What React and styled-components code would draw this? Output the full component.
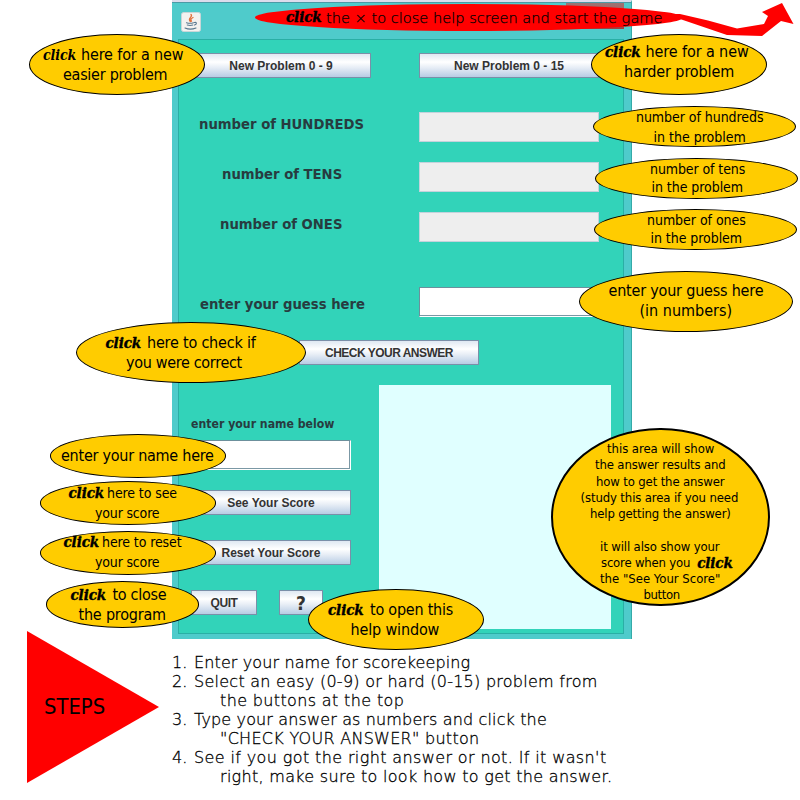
import React from "react";
import styled, { createGlobalStyle } from "styled-components";

const GlobalStyle = createGlobalStyle`
  * { box-sizing: border-box; }
  body { margin: 0; background: #fff; }
`;

const condensed = '"DejaVu Sans Condensed", "DejaVu Sans", sans-serif';

const Page = styled.main`
  position: relative;
  width: 800px;
  height: 800px;
  overflow: hidden;
  background: #fff;
  color: #000;
`;

/* ---------- game window ---------- */

const Window = styled.section`
  display: flex;
  flex-direction: column;
  width: 460px;
  height: 639px;
  margin-left: 172px;
  padding: 0 7px 5px 6px;
  background: #4fcbcb;
  border-top: 2px solid #dcdcec;
  border-right: 1px solid #35aaa8;
`;

const TitleBar = styled.header`
  display: flex;
  justify-content: space-between;
  height: 37px;
  margin: 0 -7px 0 -6px;
  padding: 9px 7px 0 9px;
  border-top: 1px solid #4b9aa6;
`;

const JavaIcon = styled.svg`
  width: 20px;
  height: 20px;
`;

const CloseBox = styled.div`
  width: 58px;
  height: 26px;
  margin-top: -9px;
  background: linear-gradient(#9c7474, #b05a5a 40%, #a04040);
`;

const Panel = styled.div`
  flex: 1;
  padding: 13px 12px 0;
  border: 1px solid #2aafa5;
  background: #32d3b9;
`;

const Row = styled.div`
  display: grid;
  grid-template-columns: 180px 180px;
  column-gap: 48px;
  align-items: center;
  height: ${(p) => p.$height}px;
  margin-bottom: ${(p) => p.$gap}px;
`;

const JButton = styled.button`
  display: block;
  width: ${(p) => p.$width || 180}px;
  height: 25px;
  padding: 1px 0 0;
  border: 1px solid #7a8fa8;
  background: linear-gradient(#dfe8f2, #fff 35%, #e8eef6 58%, #b8cce4);
  color: #333;
  font: bold 12px/22px "Liberation Sans", Arial, sans-serif;
  letter-spacing: ${(p) => p.$track || 0}px;
  text-align: center;
  white-space: nowrap;
`;

const HelpButton = styled(JButton)`
  font: bold 19px/22px ${condensed};
`;

const Label = styled.label`
  padding-top: ${(p) => p.$drop || 0}px;
  padding-left: ${(p) => p.$indent || 0}px;
  padding-bottom: ${(p) => p.$lift || 0}px;
  color: #273c40;
  font: bold 14.7px/20px ${condensed};
  white-space: nowrap;
`;

const NameLabel = styled(Label)`
  margin-bottom: 6px;
  font-size: 12.2px;
`;

const Digits = styled.output`
  height: 30px;
  background: #eee;
  border: 1px solid #c3d2dc;
`;

const Field = styled.div`
  height: 30px;
  background: #fff;
  border: 1px solid #6c909c;
  border-right-color: #fff;
  border-bottom-color: #fff;
  box-shadow: inset -1px -1px #7b98a5;
`;

const CheckRow = styled.div`
  display: flex;
  padding-left: 108px;
  margin-bottom: 20px;
`;

const Lower = styled.div`
  display: grid;
  grid-template-columns: 160px 232px;
  column-gap: 28px;
`;

const Account = styled.div`
  display: flex;
  flex-direction: column;
  padding-top: 29px;
`;

const AccountButtons = styled.div`
  display: flex;
  flex-direction: column;
  gap: 25px;
  padding-top: 20px;
`;

const ButtonPair = styled.div`
  display: flex;
  gap: 22px;
`;

const Results = styled.div`
  height: 244px;
  background: #e0ffff;
`;

/* ---------- callouts lying over the window ---------- */

const Bubble = styled.aside`
  position: absolute;
  left: ${(p) => p.$x}px;
  top: ${(p) => p.$y}px;
  width: ${(p) => p.$w}px;
  height: ${(p) => p.$h}px;
  padding-top: ${(p) => p.$pad}px;
  border: ${(p) => p.$border || 1.4}px solid #000;
  border-radius: 50%;
  background: #fc0;
  font: ${(p) => p.$size || 16}px/${(p) => p.$line || 20}px ${condensed};
`;

const BubbleLine = styled.div`
  display: flex;
  min-height: 1lh;
  padding-left: ${(p) => p.$indent}px;
  letter-spacing: ${(p) => p.$track || 0}px;
  white-space: pre;
`;

const Click = styled.em`
  width: ${(p) => p.$width || 38}px;
  font-family: "DejaVu Serif Condensed", "DejaVu Serif", serif;
  font-style: italic;
  font-weight: bold;
  font-size: ${(p) => p.$size || 15}px;
  letter-spacing: -0.1px;
  -webkit-text-stroke: ${(p) => (p.$size ? 0 : 0.4)}px #000;
`;

const CloseHint = styled.div`
  position: absolute;
  left: 255px;
  top: 4px;
  display: flex;
  width: 428px;
  height: 27px;
  padding-left: 31px;
  border-radius: 50%;
  background: #f00;
  font: 200 14.6px/27px "DejaVu Sans", sans-serif;
  -webkit-text-stroke: 0.25px #000;
  white-space: nowrap;
`;

const Arrow = styled.svg`
  position: absolute;
  left: 670px;
  top: 0;
  width: 130px;
  height: 40px;
`;

/* ---------- steps ---------- */

const Steps = styled.section`
  display: grid;
  grid-template-columns: 132px 1fr;
  column-gap: 13px;
  margin: -8px 0 0 27px;
`;

const Pointer = styled.div`
  display: flex;
  align-items: center;
  height: 152px;
  padding-left: 17px;
  background: #f00;
  clip-path: polygon(0 0, 100% 50%, 0 100%);
  font: 21.8px/24px ${condensed};
`;

const StepList = styled.ol`
  margin: 0;
  padding: 22px 0 0;
  list-style: none;
  font: 200 16px/19px "DejaVu Sans", sans-serif;
  -webkit-text-stroke: 0.3px #000;
`;

const Step = styled.li`
  display: grid;
  grid-template-columns: 22px 1fr;
`;

const StepLine = styled.span`
  grid-column: 2;
  padding-left: ${(p) => (p.$more ? 26 : 0)}px;
  letter-spacing: ${(p) => p.$track}px;
  white-space: nowrap;
`;

const bubbles = [
  { x: 29, y: 34, w: 176, h: 61, pad: 10, lines: [
    { indent: 13, click: 38, clickSize: 14, text: "here for a new", track: -0.15 },
    { indent: 33, text: "easier problem", track: -0.27 } ] },
  { x: 591, y: 34, w: 176, h: 61, pad: 7, lines: [
    { indent: 13, click: 40.5, text: "here for a new", track: -0.1 },
    { indent: 32, text: "harder problem", track: -0.1 } ] },
  { x: 593, y: 106, w: 203, h: 41, pad: 0, size: 14, lines: [
    { indent: 42, text: "number of hundreds", track: -0.05 },
    { indent: 59.5, text: "in the problem", track: 0 } ] },
  { x: 594.5, y: 158, w: 203, h: 41, pad: 1, size: 14, line: 18, lines: [
    { indent: 54.5, text: "number of tens", track: -0.1 },
    { indent: 56, text: "in the problem", track: -0.05 } ] },
  { x: 593.5, y: 209, w: 203, h: 41, pad: 1, size: 14, line: 18, lines: [
    { indent: 52.5, text: "number of ones", track: -0.04 },
    { indent: 56, text: "in the problem", track: -0.05 } ] },
  { x: 579, y: 271, w: 213.5, h: 61, pad: 9, lines: [
    { indent: 28.5, text: "enter your guess here", track: -0.2 },
    { indent: 59.5, text: "(in numbers)", track: 0 } ] },
  { x: 75.5, y: 322, w: 230.5, h: 61, pad: 10, lines: [
    { indent: 29, click: 41.5, text: "here to check if", track: -0.2 },
    { indent: 49.5, text: "you were correct", track: -0.32 } ] },
  { x: 50, y: 434, w: 176, h: 43.5, pad: 11, lines: [
    { indent: 10, text: "enter your name here", track: -0.25 } ] },
  { x: 40, y: 481, w: 176, h: 43.5, pad: 1, size: 14, lines: [
    { indent: 27.5, click: 38.5, text: "here to see", track: -0.1 },
    { indent: 54, text: "your score", track: -0.17 } ] },
  { x: 40, y: 531, w: 176, h: 43.5, pad: 0, size: 14, lines: [
    { indent: 22.5, click: 38.5, text: "here to reset", track: -0.1 },
    { indent: 54, text: "your score", track: -0.17 } ] },
  { x: 45.5, y: 581, w: 153.5, h: 46.5, pad: 3, lines: [
    { indent: 24, click: 42, text: "to close", track: -0.3 },
    { indent: 32, text: "the program", track: -0.2 } ] },
  { x: 308, y: 589, w: 176, h: 61, pad: 10, lines: [
    { indent: 19, click: 42, text: "to open this", track: -0.23 },
    { indent: 41.5, text: "help window", track: -0.15 } ] },
  { x: 551, y: 427.5, w: 218.5, h: 178.5, pad: 11.5, size: 13, line: 16.25, border: 2.6, lines: [
    { indent: 54, text: "this area will show", track: -0.04 },
    { indent: 42, text: "the answer results and", track: -0.14 },
    { indent: 43, text: "how to get the answer", track: -0.14 },
    { indent: 27.5, text: "(study this area if you need", track: -0.12 },
    { indent: 37, text: "help getting the answer)", track: -0.15 },
    { indent: 0, text: "" },
    { indent: 47, text: "it will also show your", track: -0.12 },
    { indent: 48, text: "score when you", track: -0.2, after: true },
    { indent: 47, text: 'the "See Your Score"' },
    { indent: 90.5, text: "button", track: -0.4 } ] },
];

const steps = [
  [["Enter your name for scorekeeping", 0.12]],
  [["Select an easy (0-9) or hard (0-15) problem from", 0.26], ["the buttons at the top", 0.36]],
  [["Type your answer as numbers and click the", 0.14], ['"CHECK YOUR ANSWER" button', 0.28]],
  [["See if you got the right answer or not. If it wasn't", 0.38], ["right, make sure to look how to get the answer.", 0.3]],
];

const counts = [
  { name: "HUNDREDS", indent: 8 },
  { name: "TENS", indent: 31 },
  { name: "ONES", indent: 29 },
];

function JavaCup() {
  return (
    <JavaIcon viewBox="0 0 20 20" fill="none" strokeLinecap="round">
      <rect x="0.5" y="0.5" width="19" height="19" rx="2" fill="#f3f2f0" stroke="#c9d6d8" />
      <path d="M10 2.5C12.5 5 6 6 9.3 9.5M12 5.5C9.5 7 9.5 7.5 10.5 9.3" stroke="#e0713c" strokeWidth="1.3" />
      <path d="M5.5 10.7c2 .7 5.5 .5 7 0M6.3 13c2 .6 4 .5 5.5 0M4 16c3 1.3 8 1.2 11 0M13.500 10.500c2.500-.8 2.500 1.800 0 2.500" stroke="#58788f" strokeWidth="1.1" />
    </JavaIcon>
  );
}

export default function App() {
  return (
    <Page>
      <GlobalStyle />
      <Window>
        <TitleBar>
          <JavaCup />
          <CloseBox />
        </TitleBar>
        <Panel>
          <Row $height={25} $gap={34}>
            <JButton>New Problem 0 - 9</JButton>
            <JButton>New Problem 0 - 15</JButton>
          </Row>
          {counts.map((c, i) => (
            <Row key={c.name} $height={30} $gap={i === 2 ? 45 : 20}>
              <Label $indent={c.indent} $lift={6}>number of {c.name}</Label>
              <Digits />
            </Row>
          ))}
          <Row $height={30} $gap={23}>
            <Label $indent={9} $drop={3}>enter your guess here</Label>
            <Field />
          </Row>
          <CheckRow>
            <JButton $track={-0.52}>CHECK YOUR ANSWER</JButton>
          </CheckRow>
          <Lower>
            <Account>
              <NameLabel>enter your name below</NameLabel>
              <Field />
              <AccountButtons>
                <JButton $width={160}>See Your Score</JButton>
                <JButton $width={160}>Reset Your Score</JButton>
                <ButtonPair>
                  <JButton $width={66} $track={-0.4}>QUIT</JButton>
                  <HelpButton $width={44}>?</HelpButton>
                </ButtonPair>
              </AccountButtons>
            </Account>
            <Results />
          </Lower>
        </Panel>
      </Window>

      <Steps>
        <Pointer>STEPS</Pointer>
        <StepList>
          {steps.map((lines, i) => (
            <Step key={i}>
              <span>{i + 1}.</span>
              {lines.map(([text, track], j) => (
                <StepLine key={text} $more={j > 0} $track={track}>{text}</StepLine>
              ))}
            </Step>
          ))}
        </StepList>
      </Steps>

      <Arrow viewBox="0 0 130 40">
        <path d="M0 14H10L38 20.5 67 28.5 94 24 98 16 92 12 112 3 123.5 24 111 21 92 36 57 35 10 19 0 20Z" fill="#f00" />
      </Arrow>
      <CloseHint>
        <Click $width={40}>click</Click>
        the × to close help screen and start the game
      </CloseHint>
      {bubbles.map((b, i) => (
        <Bubble key={i} $x={b.x} $y={b.y} $w={b.w} $h={b.h} $pad={b.pad} $size={b.size} $line={b.line} $border={b.border}>
          {b.lines.map((l, j) => (
            <BubbleLine key={j} $indent={l.indent} $track={l.track}>
              {l.click && <Click $width={l.click} $size={l.clickSize}>click</Click>}
              <span>{l.text}{l.after ? "  " : ""}</span>
              {l.after && <Click>click</Click>}
            </BubbleLine>
          ))}
        </Bubble>
      ))}
    </Page>
  );
}
